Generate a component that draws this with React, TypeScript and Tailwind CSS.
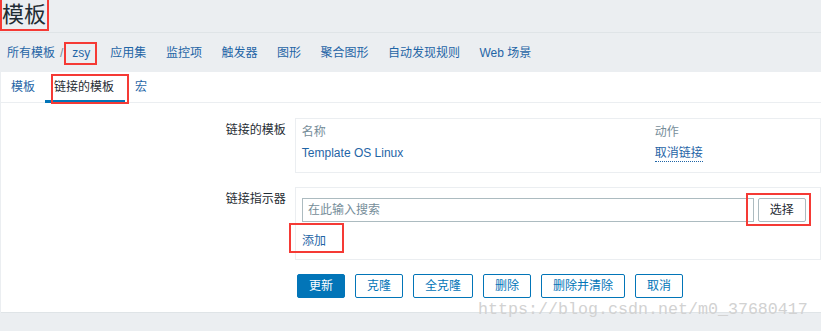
import React from "react";

const Red = ({ cls }: { cls: string }) => (
  <span className={`pointer-events-none absolute border-2 border-[#f53a35] ${cls}`} />
);

export default function App() {
  const navItems = ["应用集", "监控项", "触发器", "图形", "聚合图形", "自动发现规则", "Web 场景"];
  const buttons = ["克隆", "全克隆", "删除", "删除并清除", "取消"];
  return (
    <div className="relative w-[821px] h-[331px] overflow-hidden bg-[#ebeef1] text-[12px] text-[#1f2c33] font-['Liberation_Sans','Noto_Sans_CJK_SC',sans-serif]">
      {/* title */}
      <header className="h-[33px] border-b border-[#dfe4e7]">
        <h1 className="relative inline-block pl-[2px] pr-[3px] text-[22px] leading-[30px] font-normal text-[#1f2c33]">
          模板
          <Red cls="left-0 right-0 -top-[2px] -bottom-[1px]" />
        </h1>
      </header>

      {/* nav */}
      <nav className="h-[39px] flex items-center pl-[7px] text-[#1f65a6] leading-[14px]">
        <span>所有模板</span>
        <span className="pl-[5px] pr-[9px] text-[#768d99]">/</span>
        <span className="relative mr-[20px]">
          zsy
          <Red cls="-left-[8px] -right-[7px] -top-[4px] -bottom-[5px]" />
        </span>
        <div className="flex gap-[19.5px]">
          {navItems.map((n) => (
            <span key={n}>{n}</span>
          ))}
        </div>
      </nav>

      {/* white panel */}
      <div className="ml-[1px] h-[241px] bg-white border-b border-[#dfe4e7]">
        {/* tabs */}
        <div className="h-[31px] flex pl-[1px] border-b border-[#ebeef1]">
          <div className="px-[9px] flex items-center text-[#1f65a6]">模板</div>
          <div className="relative ml-[1px] px-[9px] w-[80px] flex items-center text-[#1f2c33]">
            链接的模板
            <span className="absolute left-0 right-0 -bottom-[1px] h-[3px] bg-[#0275b8]" />
            <Red cls="left-[6px] -right-[4px] top-[2px] -bottom-[2px]" />
          </div>
          <div className="ml-[1px] px-[9px] flex items-center text-[#1f65a6]">宏</div>
        </div>

        {/* form */}
        <div className="pt-[15px]">
          <div className="flex">
            <div className="w-[296px] pr-[9px] pt-[4px] text-right leading-[16px]">链接的模板</div>
            <div className="w-[530px] h-[55px] border border-[#ebeef1] px-[6px] pt-[3px]">
              <div className="grid grid-cols-[353px_1fr] leading-[21px] h-[21px] text-[#768d99]">
                <span>名称</span>
                <span>动作</span>
              </div>
              <div className="grid grid-cols-[353px_1fr] leading-[21px] h-[21px]">
                <span className="text-[#1f65a6]">Template OS Linux</span>
                <span>
                  <span className="text-[#1f65a6] border-b border-dotted border-[#1f65a6] leading-[15px] inline-block">取消链接</span>
                </span>
              </div>
            </div>
          </div>

          <div className="flex mt-[14px]">
            <div className="w-[296px] pr-[9px] pt-[4px] text-right leading-[16px]">链接指示器</div>
            <div className="w-[530px] h-[73px] border border-[#ebeef1] pl-[6px] pt-[10px]">
              <div className="flex items-center gap-[4px]">
                <div className="w-[452px] h-[24px] border border-[#acbbc0] px-[5px] flex items-center text-[#768d99]">
                  在此输入搜索
                </div>
                <div className="relative w-[48px] h-[24px] border border-[#acbbc0] rounded-[2px] flex items-center justify-center text-[#1f2c33]">
                  选择
                  <Red cls="-left-[13px] -right-[6px] -top-[6px] -bottom-[5px]" />
                </div>
              </div>
              <div className="mt-[10px]">
                <span className="relative inline-block leading-[16px] text-[#1f65a6]">
                  添加
                  <Red cls="-left-[13px] -right-[18px] -top-[10px] -bottom-[4px]" />
                </span>
              </div>
            </div>
          </div>

          <div className="flex mt-[14px] pl-[296px] gap-[10px]">
            <div className="h-[24px] px-[11px] rounded-[2px] bg-[#0275b8] border border-[#0275b8] text-white flex items-center">
              更新
            </div>
            {buttons.map((b) => (
              <div
                key={b}
                className="h-[24px] px-[11px] rounded-[2px] border border-[#0275b8] text-[#0275b8] flex items-center"
              >
                {b}
              </div>
            ))}
          </div>
        </div>
      </div>

      {/* watermark */}
      <div className="pointer-events-none absolute left-[478px] top-[300px] text-[16.67px] leading-[20px] text-[#d2d2d2] font-['Liberation_Mono',monospace]">
        https://blog.csdn.net/m0_37680417
      </div>
    </div>
  );
}
